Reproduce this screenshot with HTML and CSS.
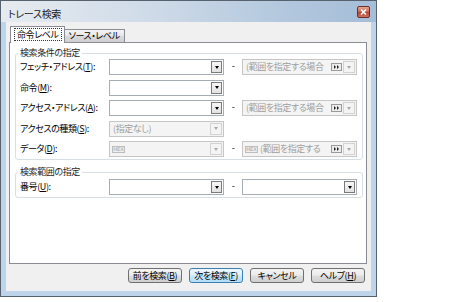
FILE: index.html
```html
<!DOCTYPE html>
<html lang="ja">
<head>
<meta charset="utf-8">
<title>トレース検索</title>
<link rel="stylesheet" href="styles.css">
</head>
<body>
<div class="window">
  <div class="titlebar">
    <span class="title">トレース検索</span>
    <span class="close"><svg width="7" height="6" viewBox="0 0 7 6"><path d="M1 0.5 L6 5.5 M6 0.5 L1 5.5" stroke="#fff" stroke-width="1.6" fill="none"/></svg></span>
  </div>
  <div class="client">
    <div class="tabs">
      <div class="tab active"><span class="focus">命令レベル</span></div>
      <div class="tab">ソース・レベル</div>
    </div>
    <div class="panel">
      <div class="group g1">
        <div class="legend">検索条件の指定</div>
        <div class="rows">
          <div class="row">
            <span class="label">フェッチ・アドレス(<u>T</u>):</span>
            <div class="combo"><span class="val"></span><span class="arrow"><i></i></span></div>
            <span class="dash">-</span>
            <div class="combo disabled range"><span class="val">(範囲を指定する場合</span><span class="ff"><svg width="6" height="4" viewBox="0 0 6 4"><path d="M0 0 L2 2 L0 4 Z M3 0 L5 2 L3 4 Z" fill="#222"/></svg></span><span class="arrow flat"><i></i></span></div>
          </div>
          <div class="row">
            <span class="label">命令(<u>M</u>):</span>
            <div class="combo"><span class="val"></span><span class="arrow"><i></i></span></div>
          </div>
          <div class="row">
            <span class="label">アクセス・アドレス(<u>A</u>):</span>
            <div class="combo"><span class="val"></span><span class="arrow"><i></i></span></div>
            <span class="dash">-</span>
            <div class="combo disabled range"><span class="val">(範囲を指定する場合</span><span class="ff"><svg width="6" height="4" viewBox="0 0 6 4"><path d="M0 0 L2 2 L0 4 Z M3 0 L5 2 L3 4 Z" fill="#222"/></svg></span><span class="arrow flat"><i></i></span></div>
          </div>
          <div class="row">
            <span class="label">アクセスの種類(<u>S</u>):</span>
            <div class="combo disabled"><span class="val">(指定なし)</span><span class="arrow flat"><i></i></span></div>
          </div>
          <div class="row">
            <span class="label">データ(<u>D</u>):</span>
            <div class="combo disabled"><span class="hex">HEX</span><span class="val"></span><span class="arrow flat"><i></i></span></div>
            <span class="dash">-</span>
            <div class="combo disabled range"><span class="hex">HEX</span><span class="val">(範囲を指定する</span><span class="ff"><svg width="6" height="4" viewBox="0 0 6 4"><path d="M0 0 L2 2 L0 4 Z M3 0 L5 2 L3 4 Z" fill="#222"/></svg></span><span class="arrow flat"><i></i></span></div>
          </div>
        </div>
      </div>
      <div class="group g2">
        <div class="legend">検索範囲の指定</div>
        <div class="rows">
          <div class="row">
            <span class="label">番号(<u>U</u>):</span>
            <div class="combo"><span class="val"></span><span class="arrow"><i></i></span></div>
            <span class="dash">-</span>
            <div class="combo"><span class="val"></span><span class="arrow"><i></i></span></div>
          </div>
        </div>
      </div>
    </div>
    <div class="buttons">
      <button class="btn">前を検索(<u>B</u>)</button>
      <button class="btn default">次を検索(<u>F</u>)</button>
      <button class="btn">キャンセル</button>
      <button class="btn">ヘルプ(<u>H</u>)</button>
    </div>
  </div>
</div>
</body>
</html>
```
FILE: styles.css
```css
* { box-sizing: border-box; margin: 0; padding: 0; }
html, body { background: #fff; }
body {
  margin: 0;
  font-family: "Noto Sans CJK JP", "Noto Sans", sans-serif;
  font-size: 9px;
  letter-spacing: -0.4px;
  line-height: 12px;
  color: #000;
  font-feature-settings: "palt";
}
u { text-decoration: underline; text-underline-offset: 1px; }

.window {
  width: 377px;
  height: 297px;
  border: 1px solid #56626e;
  background: #bed4ea;
  display: flex;
  flex-direction: column;
}
.titlebar {
  height: 21px;
  flex: none;
  display: flex;
  align-items: center;
  padding: 5px 6px 0 7px;
  background: linear-gradient(to right, #e6ebf0 0%, #d2dde9 35%, #b3c8de 75%, #a5bdd8 100%);
}
.title { flex: 1; font-size: 10px; letter-spacing: -0.3px; color: #1a1a1a; }
.close {
  width: 13px;
  height: 12px;
  margin-top: -4px;
  border: 1px solid #6e2f27;
  border-radius: 2px;
  background: linear-gradient(#e8a596 0%, #cf6a58 45%, #b94230 55%, #cf7262 100%);
  display: flex;
  align-items: center;
  justify-content: center;
}
.close svg { display: block; }

.client {
  flex: 1;
  margin: 0 5px 5px 5px;
  background: #f0f0f0;
  padding: 4px 4px 0 3px;
  display: flex;
  flex-direction: column;
}

.tabs {
  height: 16px;
  display: flex;
  align-items: flex-end;
  padding-left: 1px;
}
.tab {
  height: 13px;
  border: 1px solid #898c95;
  border-bottom: none;
  padding: 0 4px;
  display: flex;
  align-items: center;
  background: linear-gradient(#f4f4f4, #e6e6e6 50%, #d9d9d9 50%, #d0d0d0);
  color: #000;
  margin-left: -1px;
}
.tab.active {
  position: relative;
  z-index: 1;
  height: 17px;
  margin-bottom: -1px;
  margin-left: 0;
  background: #fff;
  padding: 0 2px 1px 3px;
}
.focus {
  border: 1px dotted #333;
  padding: 0 2px;
  line-height: 12px;
  height: 13px;
  display: flex;
  align-items: center;
}

.panel {
  height: 222px;
  border: 1px solid #898c95;
  background: #fff;
  padding: 10px 3px 0 5px;
}

.group {
  border: 1px solid #d5dfe5;
  border-radius: 3px;
  padding: 0 4px 2px 4px;
}
.g2 { margin-top: 12px; }
.legend {
  width: fit-content;
  height: 12px;
  margin: -7px 0 0 -2px;
  padding: 0 2px;
  background: #fff;
  color: #1e1e1e;
}
.rows { display: flex; flex-direction: column; gap: 4.5px; }
.g2 .rows { margin-top: 1px; }

.row { display: flex; align-items: center; height: 16px; }
.label { width: 89px; flex: none; white-space: nowrap; overflow: hidden; }
.dash { width: 18px; flex: none; text-align: center; margin-top: -2px; }

.combo {
  width: 115px;
  height: 16px;
  flex: none;
  border: 1px solid #a5acb5;
  background: #fff;
  display: flex;
  align-items: center;
  padding: 0 1px 0 2px;
}
.combo .val {
  flex: 1;
  white-space: nowrap;
  overflow: hidden;
  padding-left: 1px;
}
.arrow {
  width: 11px;
  height: 12px;
  flex: none;
  border: 1px solid #7a7a7a;
  background: linear-gradient(#f6f6f6, #e2e2e2);
  display: flex;
  align-items: center;
  justify-content: center;
}
.arrow i {
  display: block;
  width: 1px;
  height: 0;
  border-left: 2px solid transparent;
  border-right: 2px solid transparent;
  border-top: 3px solid #000;
}
.combo.disabled {
  background: #f4f4f4;
  border-color: #c6c6c6;
  color: #9d9d9d;
}
.arrow.flat {
  border-color: #d2d2d2;
  background: #f4f4f4;
  width: 12px;
}
.arrow.flat i { border-top-color: #a8a8a8; }

.ff {
  width: 11px;
  height: 8px;
  flex: none;
  border: 1px solid #9a9a9a;
  background: #ececec;
  display: flex;
  align-items: center;
  justify-content: center;
  margin: 0 1px 0 4px;
}
.ff svg { display: block; }

.hex {
  flex: none;
  width: 13px;
  height: 7px;
  border: 1px solid #bdbdbd;
  background: #efefef;
  font-size: 5px;
  line-height: 5px;
  letter-spacing: 0;
  color: #a0a0a0;
  text-align: center;
  font-family: "DejaVu Sans", sans-serif;
  margin-right: 1px;
}

.buttons {
  margin-top: 4px;
  height: 15px;
  display: flex;
  justify-content: flex-end;
  gap: 7px;
  padding-right: 2px;
}
.btn {
  width: 54px;
  height: 15px;
  border: 1px solid #707070;
  border-radius: 3px;
  background: linear-gradient(#f3f3f3 0%, #ebebeb 48%, #dddddd 52%, #cfcfcf 100%);
  font-family: inherit;
  font-size: 9px;
  letter-spacing: -0.4px;
  line-height: 12px;
  color: #000;
  font-feature-settings: "palt";
  display: flex;
  align-items: center;
  justify-content: center;
  padding: 0;
  white-space: nowrap;
}
.btn.default {
  border-color: #3c7fb1;
  background: linear-gradient(#ecf7fd 0%, #dcf1fc 48%, #c6e8fc 52%, #b3def6 100%);
}
```
